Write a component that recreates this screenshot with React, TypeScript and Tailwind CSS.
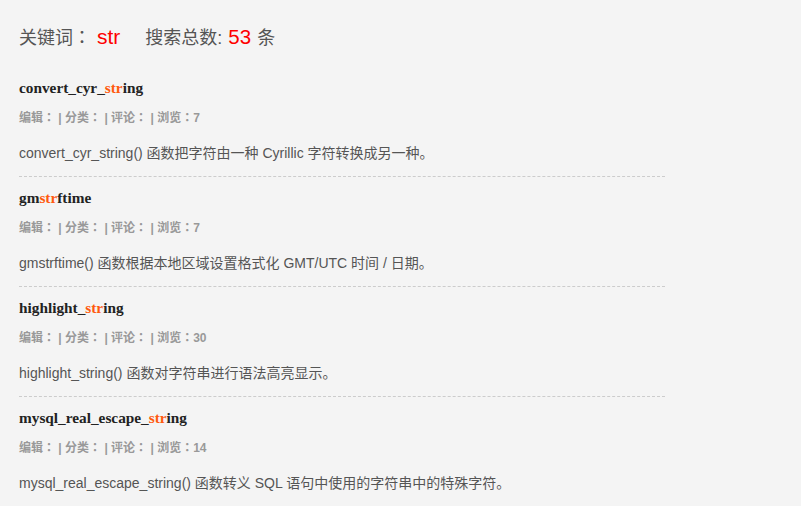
import React from "react";

type Item = { pre: string; hit: string; post: string; views: number; desc: string };

const items: Item[] = [
  { pre: "convert_cyr_", hit: "str", post: "ing", views: 7, desc: "convert_cyr_string() 函数把字符由一种 Cyrillic 字符转换成另一种。" },
  { pre: "gm", hit: "str", post: "ftime", views: 7, desc: "gmstrftime() 函数根据本地区域设置格式化 GMT/UTC 时间 / 日期。" },
  { pre: "highlight_", hit: "str", post: "ing", views: 30, desc: "highlight_string() 函数对字符串进行语法高亮显示。" },
  { pre: "mysql_real_escape_", hit: "str", post: "ing", views: 14, desc: "mysql_real_escape_string() 函数转义 SQL 语句中使用的字符串中的特殊字符。" },
];

function Colon() {
  return <span className="font-['Noto_Sans_CJK_JP',sans-serif] leading-none">：</span>;
}

export default function App() {
  return (
    <div className="min-h-screen w-full bg-[#f4f4f4] pl-[19px] pt-[22px] font-['Liberation_Sans','Noto_Sans_CJK_SC',sans-serif]">
      <div className="h-[45px] text-[18px] leading-[30px] text-[#555]">
        关键词<Colon />
        <span className="ml-[6px] text-[21px] text-[#ff0000]">str</span>
        <span className="ml-[25px]">搜索总数:</span>
        <span className="ml-[6px] text-[20.5px] text-[#ff0000]">53</span>
        <span className="ml-[6px]">条</span>
      </div>
      {items.map((it, i) => (
        <div
          key={i}
          className={`w-[646px] pt-[11px] pb-[13px] ${i < items.length - 1 ? "border-b border-dashed border-[#ccc]" : ""}`}
        >
          <h3 className="h-[20px] font-['Liberation_Serif','Noto_Sans_CJK_SC',serif] text-[15.3px] font-bold leading-[20px] text-[#222]">
            {it.pre}
            <span className="text-[#ff5a0f]">{it.hit}</span>
            {it.post}
          </h3>
          <p className="mt-[10px] h-[20px] text-[12px] font-bold leading-[20px] text-[#999]">
            编辑<Colon /> | 分类<Colon /> | 评论<Colon /> | 浏览<Colon />{it.views}
          </p>
          <p className="mt-[15px] h-[20px] text-[14px] leading-[20px] text-[#555]">{it.desc}</p>
        </div>
      ))}
    </div>
  );
}
